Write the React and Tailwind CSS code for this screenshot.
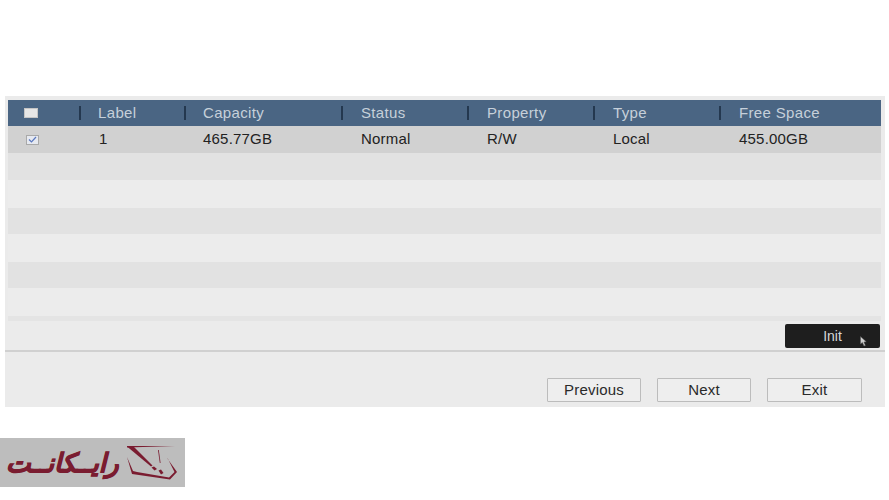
import React from "react";

const columns = ["Label", "Capacity", "Status", "Property", "Type", "Free Space"];
const values = ["1", "465.77GB", "Normal", "R/W", "Local", "455.00GB"];
const gridCols = "grid grid-cols-[72px_105px_157px_126px_126px_126px_161px]";

function Logo() {
  return (
    <div className="w-[185px] h-[49px] bg-[#bdbdbd] flex items-center justify-between pl-[6px]">
      <span dir="rtl" className="text-[26px] leading-none font-bold italic text-[#7a1c30] [-webkit-text-stroke:0.9px_#7a1c30] font-['DejaVu_Sans',sans-serif]">
        رایــکانــت
      </span>
      <svg width="65" height="45" viewBox="0 0 65 45" fill="#7a1c30" stroke="none">
        <path d="M7 6 L55 6 L7 7.5 Z" />
        <path d="M7 6.5 L14 7 L32.5 25.5 L31 26.5 Z" />
        <path d="M7 17 L12 34 L50 39.5 L57 32 L47 18 L48 19 L54.5 32 L49 37.5 L17 32 L13 31 Z" />
        <path d="M38 10 L38.8 10 L40.6 23 L39.8 23 Z" />
        <path d="M31.5 27.5 L34 26.5 L37 29 L34.5 30.5 Z" />
        <path d="M38.5 30.5 L41 29.5 L43.5 33 L41 34.5 Z" />
      </svg>
    </div>
  );
}

export default function App() {
  return (
    <div className="w-[889px] h-[500px] bg-white overflow-hidden font-['Liberation_Sans',sans-serif]">
      <div className="h-[96px]" />

      {/* main panel */}
      <div className="ml-[5px] w-[880px] h-[311px] bg-[#ebebeb] pt-[4px] flex flex-col">
        <div className="ml-[3px] w-[873px]">
          <div className={`${gridCols} h-[26px] bg-[#4a6583] text-[15px] tracking-[0.35px] text-[#c6d0da]`}>
            <div className="flex items-center pl-[16px]">
              <span className="w-[14px] h-[10px] bg-[#e6e6e6] border border-[#c5c5c5]" />
            </div>
            {columns.map((c, i) => (
              <div key={c} className="flex items-center pl-[18px] pt-[1px] relative">
                <span className="absolute left-[-1px] top-[6px] w-[2px] h-[14px] bg-[#24384f]" />
                <span className={i < 2 ? "" : "ml-[1px]"}>{c}</span>
              </div>
            ))}
          </div>

          <div className={`${gridCols} h-[27px] bg-[#d1d1d1] text-[15px] tracking-[0.2px] text-[#222222]`}>
            <div className="flex items-center pl-[18px]">
              <span className="w-[13px] h-[10px] bg-[#e6e9f0] border border-[#a9a9a9] flex items-center justify-center">
                <svg width="9" height="7" viewBox="0 0 9 7" fill="none">
                  <path d="M1 3.5 L3.5 6 L8 1" stroke="#5a78c0" strokeWidth="1.2" />
                </svg>
              </span>
            </div>
            {values.map((v, i) => (
              <div key={v} className="flex items-center pl-[18px]">
                <span className={i === 1 ? "" : "ml-[1px]"}>{v}</span>
              </div>
            ))}
          </div>

          <div className="h-[27px] bg-[#e2e2e2]" />
          <div className="h-[28px] bg-[#ececec]" />
          <div className="h-[26px] bg-[#e2e2e2]" />
          <div className="h-[28px] bg-[#ececec]" />
          <div className="h-[26px] bg-[#e2e2e2]" />
          <div className="h-[28px] bg-[#ececec]" />
          <div className="h-[5px] bg-[#e4e4e4]" />
        </div>

        <div className="flex justify-end pr-[5px] mt-[3px]">
          <button className="w-[95px] h-[24px] bg-[#1e1e1e] rounded-[2px] text-[#d8d8d8] text-[14px] relative">
            Init
            <svg className="absolute left-[75px] top-[12px]" width="7" height="11" viewBox="0 0 7 11">
              <path d="M0.5 0.5 L0.5 8 L2.4 6.4 L4 10 L5.4 9.4 L3.9 6 L6.3 5.8 Z" fill="#d0d0d0" stroke="#555555" strokeWidth="0.5" />
            </svg>
          </button>
        </div>

        <div className="h-[2px] bg-[#d0d0d0] mt-[2px]" />

        <div className="flex justify-end gap-[16px] pr-[23px] mt-[26px]">
          <button className="w-[94px] h-[24px] bg-[#eeeeee] border border-[#bcbcbc] rounded-[1px] text-[15px] tracking-[0.2px] text-[#2a2a2a]">
            Previous
          </button>
          <button className="w-[94px] h-[24px] bg-[#eeeeee] border border-[#bcbcbc] rounded-[1px] text-[15px] tracking-[0.2px] text-[#2a2a2a]">
            Next
          </button>
          <button className="w-[95px] h-[24px] bg-[#eeeeee] border border-[#bcbcbc] rounded-[1px] text-[15px] tracking-[0.2px] text-[#2a2a2a]">
            Exit
          </button>
        </div>
      </div>

      <div className="mt-[31px]">
        <Logo />
      </div>
    </div>
  );
}
